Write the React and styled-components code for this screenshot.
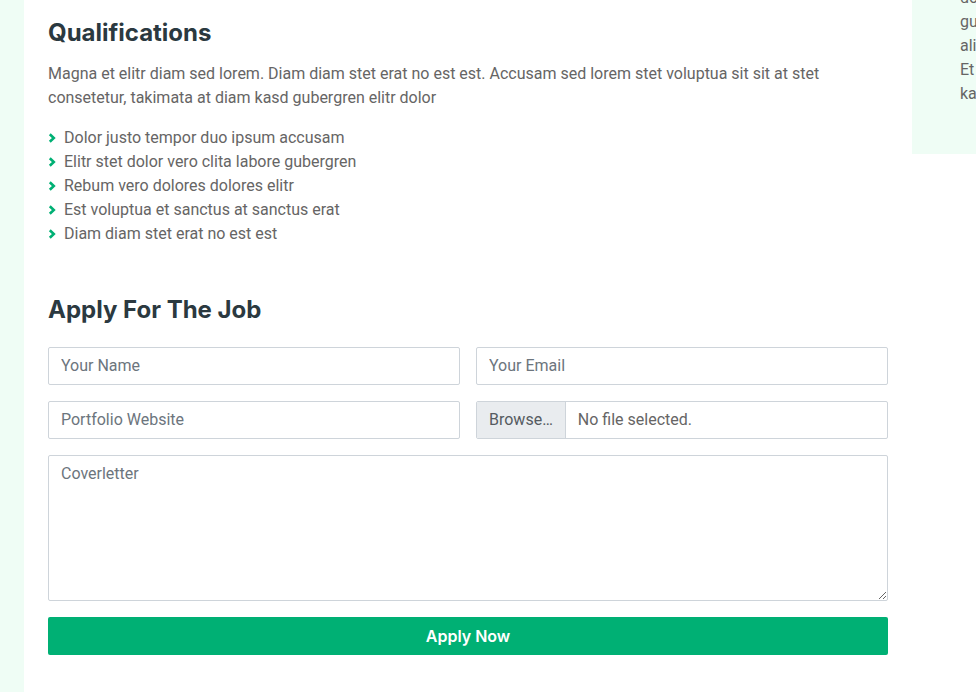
import React from "react";
import styled, { createGlobalStyle } from "styled-components";

const GlobalStyle = createGlobalStyle`
  html, body {
    margin: 0;
    padding: 0;
    background: #ffffff;
    overflow: hidden;
    height: 692px;
  }
  * { box-sizing: border-box; }
`;

const qualifications = [
  "Dolor justo tempor duo ipsum accusam",
  "Elitr stet dolor vero clita labore gubergren",
  "Rebum vero dolores dolores elitr",
  "Est voluptua et sanctus at sanctus erat",
  "Diam diam stet erat no est est",
];

const companyLines = [
  "Ipsum dolor ipsum accusam stet et et",
  "dolore sit diam et kasd sea duo lorem",
  "gubergren diam clita lorem et dolor",
  "aliquyam dolores diam sed justo erat",
  "Et stet dolores dolor diam sadipscing",
  "kasd sit ipsum lorem amet",
];

const Page = styled.div`
  display: grid;
  grid-template-columns: 888px 1fr;
  align-items: start;
  margin-top: -131px;
  border-left: 24px solid #effdf5;
  min-height: 900px;
  font-family: Roboto, "Liberation Sans", sans-serif;
  font-size: 16px;
  line-height: 24px;
  color: #666565;
`;

const Main = styled.div`
  padding: 150px 24px 40px;
  background: #ffffff;
`;

const Heading = styled.h4`
  font-family: Inter, "Liberation Sans", sans-serif;
  font-size: 24px;
  font-weight: 700;
  line-height: 28.8px;
  color: #2b3940;
  margin: 0 0 ${(p) => p.$mb || 16}px;
`;

const Text = styled.p`
  margin: 0 0 16px;
`;

const List = styled.ul`
  list-style: none;
  margin: 0 0 50px;
  padding: 0;
`;

const Item = styled.li`
  display: flex;
  align-items: center;
`;

const Chevron = styled.svg`
  width: 8px;
  height: 10px;
  margin-right: 8px;
  flex-shrink: 0;
`;

const Form = styled.form`
  display: grid;
  grid-template-columns: 1fr 1fr;
  gap: 16px;
`;

const Input = styled.input`
  height: 38px;
  width: 100%;
  padding: 6px 12px;
  border: 1px solid #ced4da;
  border-radius: 2px;
  font-family: Roboto, "Liberation Sans", sans-serif;
  font-size: 16px;
  color: #666565;
  outline: none;
  &::placeholder { color: #6c757d; }
`;

const FileField = styled.label`
  display: flex;
  height: 38px;
  border: 1px solid #ced4da;
  border-radius: 2px;
  overflow: hidden;
  cursor: pointer;
  color: #666565;
`;

const BrowseButton = styled.span`
  display: flex;
  align-items: center;
  padding: 0 12px;
  background: #e9ecef;
  border-right: 1px solid #ced4da;
  color: #555b61;
`;

const FileName = styled.span`
  display: flex;
  align-items: center;
  padding: 0 12px;
`;

const TextArea = styled.textarea`
  grid-column: 1 / -1;
  height: 146px;
  padding: 6px 12px;
  border: 1px solid #ced4da;
  border-radius: 2px;
  font-family: Roboto, "Liberation Sans", sans-serif;
  font-size: 16px;
  line-height: 24px;
  color: #666565;
  outline: none;
  &::placeholder { color: #6c757d; }
`;

const SubmitButton = styled.button`
  grid-column: 1 / -1;
  height: 38px;
  border: none;
  border-radius: 2px;
  background: #00b074;
  color: #ffffff;
  font-family: Inter, "Liberation Sans", sans-serif;
  font-size: 16px;
  font-weight: 600;
  cursor: pointer;
`;

const SideCard = styled.aside`
  background: #effdf5;
  padding: 48px;
  overflow: hidden;
  white-space: nowrap;
`;

const SideText = styled.p`
  margin: 0;
`;

const App = () => {
  return (
    <>
      <GlobalStyle />
      <Page>
        <Main>
          <Heading $mb={14}>Qualifications</Heading>
          <Text>
            Magna et elitr diam sed lorem. Diam diam stet erat no est est. Accusam sed lorem stet voluptua sit sit at stet
            consetetur, takimata at diam kasd gubergren elitr dolor
          </Text>
          <List>
            {qualifications.map((q) => (
              <Item key={q}>
                <Chevron viewBox="0 0 8 10">
                  <path d="M1.8 1.2 L5.8 5 L1.8 8.8" fill="none" stroke="#00b074" strokeWidth="2.6" />
                </Chevron>
                {q}
              </Item>
            ))}
          </List>

          <Heading $mb={22}>Apply For The Job</Heading>
          <Form onSubmit={(e) => e.preventDefault()}>
            <Input type="text" placeholder="Your Name" />
            <Input type="email" placeholder="Your Email" />
            <Input type="text" placeholder="Portfolio Website" />
            <FileField>
              <BrowseButton>Browse…</BrowseButton>
              <FileName>No file selected.</FileName>
              <input type="file" hidden />
            </FileField>
            <TextArea placeholder="Coverletter" />
            <SubmitButton type="submit">Apply Now</SubmitButton>
          </Form>
        </Main>

        <SideCard>
          <Heading>Company Detail</Heading>
          <SideText>
            {companyLines.map((l, i) => (
              <React.Fragment key={i}>
                {l}
                {i < companyLines.length - 1 && <br />}
              </React.Fragment>
            ))}
          </SideText>
        </SideCard>
      </Page>
    </>
  );
};

export default App;
